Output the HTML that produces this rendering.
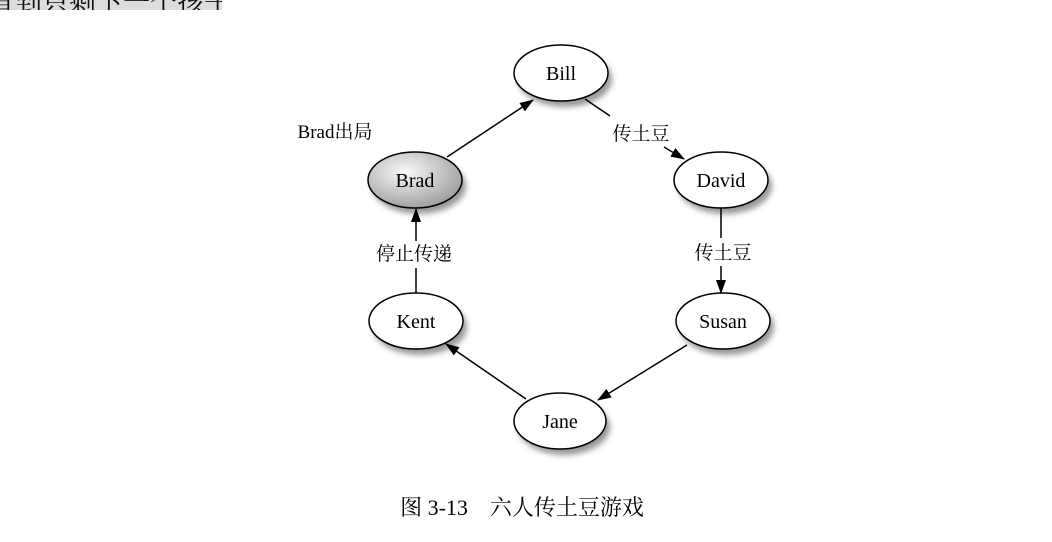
<!DOCTYPE html>
<html><head><meta charset="utf-8"><style>
html,body{margin:0;padding:0;background:#fff;width:1052px;height:542px;overflow:hidden}
.top{position:absolute;left:0;top:0;width:222px;height:10px;overflow:hidden;background:#ddd}
.top span{position:absolute;left:-12px;top:-19px;font:27px "Liberation Serif","Noto Serif CJK SC",serif;color:#111;white-space:nowrap}
</style></head><body>
<div class="top"><span>直到只剩下一个孩子。</span></div>
<svg width="1052" height="542" style="position:absolute;left:0;top:0" xmlns="http://www.w3.org/2000/svg">
<defs>
<filter id="sh" x="-30%" y="-30%" width="160%" height="170%"><feGaussianBlur stdDeviation="3"/></filter>
<radialGradient id="g" cx="40%" cy="35%" r="70%"><stop offset="0" stop-color="#fafafa"/><stop offset="1" stop-color="#9a9a9a"/></radialGradient>
<marker id="a" markerWidth="14" markerHeight="10" refX="13" refY="5" orient="auto" markerUnits="userSpaceOnUse"><path d="M0,0 L14,5 L0,10 z" fill="#000"/></marker>
</defs>
<g font-family="Liberation Serif, Noto Serif CJK SC, serif" font-size="19" text-anchor="middle">
<g fill="#555" opacity="0.6" filter="url(#sh)">
<ellipse cx="565" cy="79" rx="47" ry="28"/><ellipse cx="419" cy="186" rx="47" ry="28"/><ellipse cx="725" cy="186" rx="47" ry="28"/>
<ellipse cx="727" cy="327" rx="47" ry="28"/><ellipse cx="420" cy="327" rx="47" ry="28"/><ellipse cx="564" cy="427" rx="46" ry="28"/>
</g>
<g stroke="#000" stroke-width="1.5" fill="none">
<line x1="447" y1="157" x2="533" y2="100" marker-end="url(#a)"/>
<line x1="585" y1="99" x2="610" y2="116"/>
<line x1="664" y1="147" x2="684" y2="159" marker-end="url(#a)"/>
<line x1="721" y1="208" x2="721" y2="238"/>
<line x1="721" y1="266" x2="721" y2="293" marker-end="url(#a)"/>
<line x1="687" y1="345" x2="598" y2="400" marker-end="url(#a)"/>
<line x1="526" y1="399" x2="446" y2="344" marker-end="url(#a)"/>
<line x1="416" y1="293" x2="416" y2="268"/>
<line x1="416" y1="241" x2="416" y2="209" marker-end="url(#a)"/>
</g>
<g stroke="#000" stroke-width="1.5" fill="#fff">
<ellipse cx="561" cy="73" rx="47" ry="28"/><ellipse cx="415" cy="180" rx="47" ry="28" fill="url(#g)"/><ellipse cx="721" cy="180" rx="47" ry="28"/>
<ellipse cx="723" cy="321" rx="47" ry="28"/><ellipse cx="416" cy="321" rx="47" ry="28"/><ellipse cx="560" cy="421" rx="46" ry="28"/>
</g>
<g font-size="20">
<text x="561" y="80">Bill</text><text x="415" y="187">Brad</text><text x="721" y="187">David</text>
<text x="723" y="328">Susan</text><text x="416" y="328">Kent</text><text x="560" y="428">Jane</text>
</g>
<text x="641" y="140">传土豆</text><text x="723" y="259">传土豆</text><text x="414" y="260">停止传递</text>
<text x="335" y="138">Brad出局</text>
<text x="522" y="515" font-size="22">图 3-13　六人传土豆游戏</text>
</g>
</svg>
</body></html>
